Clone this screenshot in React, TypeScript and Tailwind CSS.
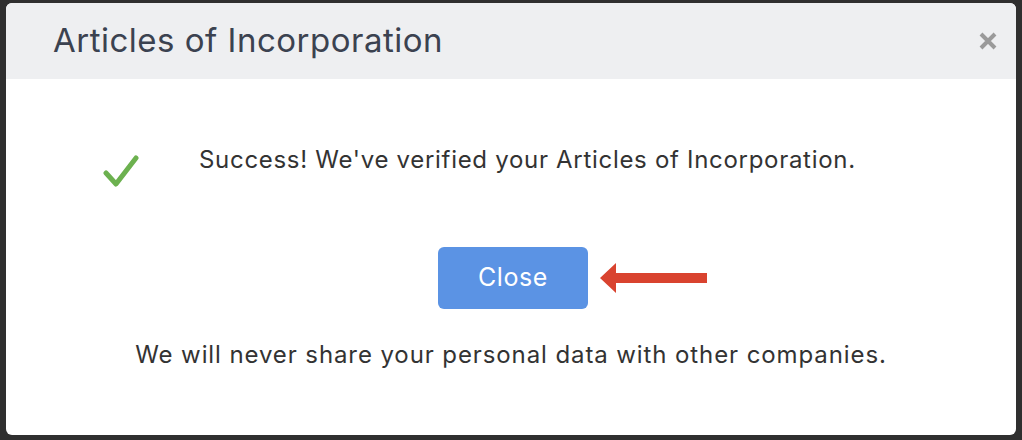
import React from 'react';

const CheckIcon: React.FC = () => (
    <svg width="36" height="36" viewBox="0 0 36 36" fill="none">
        <path d="M3 20 L13 31 L33 5" stroke="#6cb14f" strokeWidth="5" strokeLinecap="round" strokeLinejoin="round" />
    </svg>
);

const CloseX: React.FC = () => (
    <svg width="18" height="18" viewBox="0 0 18 18">
        <path d="M2 2 L16 16 M16 2 L2 16" stroke="#9a9a9a" strokeWidth="4" />
    </svg>
);

const ArrowIcon: React.FC = () => (
    <svg width="108" height="32" viewBox="0 0 108 32">
        <polygon points="0,16 16,1 16,11 107,11 107,21 16,21 16,31" fill="#d9432f" />
    </svg>
);

const App: React.FC = () => {
    return (
        <div
            className="w-[1022px] h-[440px] bg-[#2f2f2f] pt-[3px] pb-[5px] px-[6px] flex"
            style={{ fontFamily: 'Inter, "Open Sans", sans-serif' }}
        >
            <div className="flex-1 flex flex-col bg-white rounded-[6px] overflow-hidden">
                {/* Header */}
                <div className="h-[76px] bg-[#eeeff1] flex items-center justify-between pl-[47px] pr-[19px]">
                    <h1 className="text-[33px] leading-[40px] tracking-[0.5px] text-[#3b4250] -mt-[2px]">
                        Articles of Incorporation
                    </h1>
                    <CloseX />
                </div>

                {/* Body */}
                <div className="flex-1 flex flex-col">
                    <div className="flex items-start pt-[66px] pl-[97px]">
                        <div className="mt-[8px]">
                            <CheckIcon />
                        </div>
                        <p className="ml-[60px] text-[24px] tracking-[0.7px] text-[#333] leading-[30px]">
                            Success! We've verified your Articles of Incorporation.
                        </p>
                    </div>

                    <div className="flex justify-center mt-[58px] pl-[4px]">
                        <div className="relative">
                            <button className="w-[150px] h-[62px] rounded-[6px] bg-[#5b93e4] text-white text-[25px] tracking-[0.6px]">
                                Close
                            </button>
                            <div className="absolute left-[162px] top-[15px]">
                                <ArrowIcon />
                            </div>
                        </div>
                    </div>

                    <p className="mt-[31px] text-center text-[24px] tracking-[0.9px] text-[#333] leading-[30px]">
                        We will never share your personal data with other companies.
                    </p>
                </div>
            </div>
        </div>
    );
};

export default App;
